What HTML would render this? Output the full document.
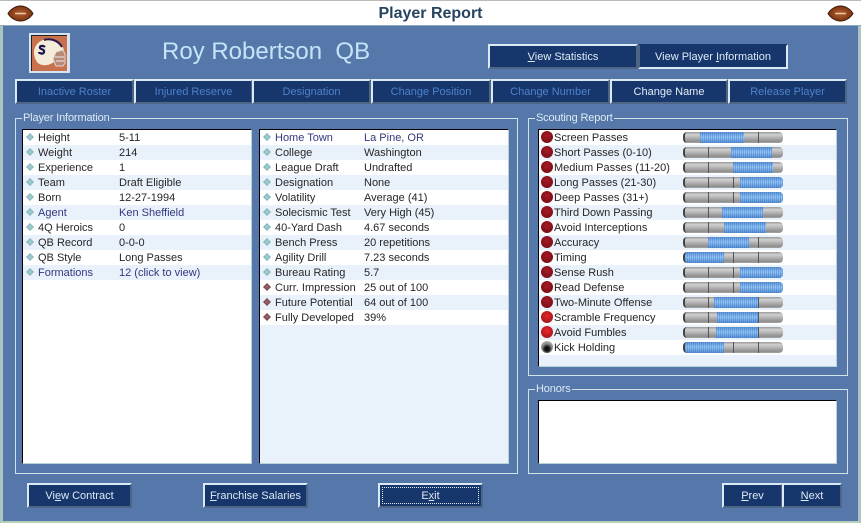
<!DOCTYPE html>
<html><head><meta charset="utf-8"><style>
html,body{margin:0;padding:0}
body{width:861px;height:523px;position:relative;overflow:hidden;background:#5577a9;font:11px/15px "Liberation Sans",sans-serif;color:#262626}
div,span{position:absolute;box-sizing:border-box}
.b{background:#16366c;border:2px solid;border-color:#dbe9f5 #4d6686 #4d6686 #dbe9f5;color:#dfeaf5;text-align:center;line-height:23px;white-space:nowrap}
.t{top:79px;height:25px;color:#4f83ca}
.g{border:1px solid #cfe3e8}
.l{color:#dcebf5;background:#5577a9;left:6px;top:-8px;padding:0 1px;line-height:14px;white-space:nowrap;letter-spacing:-.15px}
.lst{background:#fff;border:1px solid;border-color:#000 #b8d2d8 #b8d2d8 #000}
.r{position:relative;height:15px;white-space:nowrap}
.r span{top:1px}
.e{background:#e9f1fb}
.a{color:#33397f}
.d{width:8px;height:8px;top:3px!important;left:3px;background:radial-gradient(circle,#a5d6d2,#6898a8);clip-path:polygon(50% 0,100% 50%,50% 100%,0 50%)}
.x{background:radial-gradient(circle,#a06a70,#5a2a30)}
.o{width:12px;height:12px;left:2px;top:1px!important;border-radius:50%;background:radial-gradient(circle at 50% 40%,#a81a24,#6c0a14)}
.bar{left:144px;top:2px!important;width:100px;height:11px;border-radius:4px;overflow:hidden;background:linear-gradient(#9a9a9a,#d0d0d0 25%,#aaa 60%,#8e8e8e 85%,#a5a5a5);border-left:2px solid #444}
.bar i{position:absolute;top:0;bottom:0;width:1px;background:#555}
.bar b{position:absolute;top:0;bottom:0;background:linear-gradient(rgba(40,90,170,.4),rgba(255,255,255,.15) 45%,rgba(40,90,170,.45)),repeating-linear-gradient(90deg,#5a9ae6 0 1px,#86bdf0 1px 2px)}
u{text-decoration:underline}
</style></head><body>
<div style="left:0;top:0;width:861px;height:523px;border:3px solid #aac4c0;border-top:0;border-bottom:2px solid #b5d0b8"></div>
<div style="left:0;top:0;width:861px;height:26px;background:#fff;border-top:1px solid #bbb;border-bottom:1px solid #8fa9c0"></div>
<div style="left:0;top:4px;width:861px;text-align:center;font:bold 16px/20px 'Liberation Sans',sans-serif;color:#26445f">Player Report</div>
<svg style="position:absolute;left:7px;top:5px" width="27" height="17"><defs><radialGradient id="fb"><stop offset="0" stop-color="#b55f30"/><stop offset="1" stop-color="#7a3414"/></radialGradient></defs><path d="M1 8.500C4 3.500 9 1 13.500 1S23 3.500 26 8.500C23 13.500 18 16 13.500 16S4 13.500 1 8.500z" fill="url(#fb)" stroke="#3d1a08"/><path d="M8 8.500h11" stroke="#e8c8a0" stroke-width="1.500"/></svg>
<svg style="position:absolute;left:827px;top:5px" width="27" height="17"><path d="M1 8.500C4 3.500 9 1 13.500 1S23 3.500 26 8.500C23 13.500 18 16 13.500 16S4 13.500 1 8.500z" fill="url(#fb)" stroke="#3d1a08"/><path d="M8 8.500h11" stroke="#e8c8a0" stroke-width="1.500"/></svg>

<svg style="position:absolute;left:29px;top:33px" width="41" height="40"><rect x="0" y="0" width="41" height="40" fill="#d5e4ee"/><rect x="2" y="2" width="36" height="36" fill="#c8714c"/><path d="M2.500 38V2.500H38" fill="none" stroke="#222"/><path d="M5 20C5 11 12 6 20 6c8 0 13 5 15 11l-8 2v8C22 33 12 34 8 29c-2-3-3-6-3-9z" fill="#f4ecd8"/><path d="M15 7c6-2 14 0 18 7" fill="none" stroke="#2a1a50" stroke-width="2"/><path d="M16 14c-2-2-6-1-5 1s5 1 4 4-5 1-5 0" fill="none" stroke="#1a1450" stroke-width="2.200"/><path d="M27 19l7-2 2 4v9l-2 3h-7l-3-7z" fill="#b88878" stroke="#e0d8d0"/><path d="M26 24h9M27 28h8" stroke="#eee"/></svg>
<div style="left:162px;top:37px;font-size:24px;line-height:30px;color:#c5e4f8;white-space:pre">Roy Robertson  QB</div>

<div class="b" style="left:488px;top:44px;width:150px;height:25px"><u>V</u>iew Statistics</div>
<div class="b" style="left:638px;top:44px;width:150px;height:25px;border-color:#16366c #dbe9f5 #dbe9f5 #4d6686">View Player <u>I</u>nformation</div>

<div class="b t" style="left:15px;width:119px">Inactive Roster</div>
<div class="b t" style="left:134px;width:119px">Injured Reserve</div>
<div class="b t" style="left:252px;width:119px">Designation</div>
<div class="b t" style="left:371px;width:120px">Change Position</div>
<div class="b t" style="left:491px;width:119px">Change Number</div>
<div class="b t" style="left:610px;width:118px;color:#e4eef8">Change Name</div>
<div class="b t" style="left:728px;width:119px">Release Player</div>

<div class="g" style="left:15px;top:118px;width:503px;height:356px"><div class="l">Player Information</div></div>
<div class="g" style="left:528px;top:118px;width:320px;height:258px"><div class="l">Scouting Report</div></div>
<div class="g" style="left:528px;top:389px;width:320px;height:85px"><div class="l">Honors</div></div>

<div class="lst" style="left:22px;top:129px;width:230px;height:335px">
<div class="r"><span class="d"></span><span style="left:15px">Height</span><span style="left:96px">5-11</span></div>
<div class="r e"><span class="d"></span><span style="left:15px">Weight</span><span style="left:96px">214</span></div>
<div class="r"><span class="d"></span><span style="left:15px">Experience</span><span style="left:96px">1</span></div>
<div class="r e"><span class="d"></span><span style="left:15px">Team</span><span style="left:96px">Draft Eligible</span></div>
<div class="r"><span class="d"></span><span style="left:15px">Born</span><span style="left:96px">12-27-1994</span></div>
<div class="r e a"><span class="d"></span><span style="left:15px">Agent</span><span style="left:96px">Ken Sheffield</span></div>
<div class="r"><span class="d"></span><span style="left:15px">4Q Heroics</span><span style="left:96px">0</span></div>
<div class="r e"><span class="d"></span><span style="left:15px">QB Record</span><span style="left:96px">0-0-0</span></div>
<div class="r"><span class="d"></span><span style="left:15px">QB Style</span><span style="left:96px">Long Passes</span></div>
<div class="r e a"><span class="d"></span><span style="left:15px">Formations</span><span style="left:96px">12 (click to view)</span></div>
</div>

<div class="lst" style="left:259px;top:129px;width:250px;height:335px;background:#e9f1fb">
<div class="r a" style="background:#fff"><span class="d"></span><span style="left:15px">Home Town</span><span style="left:104px">La Pine, OR</span></div>
<div class="r e"><span class="d"></span><span style="left:15px">College</span><span style="left:104px">Washington</span></div>
<div class="r" style="background:#fff"><span class="d"></span><span style="left:15px">League Draft</span><span style="left:104px">Undrafted</span></div>
<div class="r e"><span class="d"></span><span style="left:15px">Designation</span><span style="left:104px">None</span></div>
<div class="r" style="background:#fff"><span class="d"></span><span style="left:15px">Volatility</span><span style="left:104px">Average (41)</span></div>
<div class="r e"><span class="d"></span><span style="left:15px">Solecismic Test</span><span style="left:104px">Very High (45)</span></div>
<div class="r" style="background:#fff"><span class="d"></span><span style="left:15px">40-Yard Dash</span><span style="left:104px">4.67 seconds</span></div>
<div class="r e"><span class="d"></span><span style="left:15px">Bench Press</span><span style="left:104px">20 repetitions</span></div>
<div class="r" style="background:#fff"><span class="d"></span><span style="left:15px">Agility Drill</span><span style="left:104px">7.23 seconds</span></div>
<div class="r e"><span class="d"></span><span style="left:15px">Bureau Rating</span><span style="left:104px">5.7</span></div>
<div class="r" style="background:#fff"><span class="d x"></span><span style="left:15px">Curr. Impression</span><span style="left:104px">25 out of 100</span></div>
<div class="r e"><span class="d x"></span><span style="left:15px">Future Potential</span><span style="left:104px">64 out of 100</span></div>
<div class="r" style="background:#fff"><span class="d x"></span><span style="left:15px">Fully Developed</span><span style="left:104px">39%</span></div>
</div>

<div class="lst" style="left:538px;top:129px;width:299px;height:238px;background:#e9f1fb">
<div class="r" style="background:#fff"><span class="o"></span><span style="left:15px">Screen Passes</span><span class="bar"><i style="left:23px"></i><i style="left:48px"></i><i style="left:73px"></i><b style="left:15px;width:44px"></b></span></div>
<div class="r e"><span class="o"></span><span style="left:15px">Short Passes (0-10)</span><span class="bar"><i style="left:23px"></i><i style="left:48px"></i><i style="left:73px"></i><b style="left:46px;width:41px"></b></span></div>
<div class="r" style="background:#fff"><span class="o"></span><span style="left:15px">Medium Passes (11-20)</span><span class="bar"><i style="left:23px"></i><i style="left:48px"></i><i style="left:73px"></i><b style="left:48px;width:40px"></b></span></div>
<div class="r e"><span class="o"></span><span style="left:15px">Long Passes (21-30)</span><span class="bar"><i style="left:23px"></i><i style="left:48px"></i><i style="left:73px"></i><b style="left:55px;width:43px"></b></span></div>
<div class="r" style="background:#fff"><span class="o"></span><span style="left:15px">Deep Passes (31+)</span><span class="bar"><i style="left:23px"></i><i style="left:48px"></i><i style="left:73px"></i><b style="left:55px;width:43px"></b></span></div>
<div class="r e"><span class="o"></span><span style="left:15px">Third Down Passing</span><span class="bar"><i style="left:23px"></i><i style="left:48px"></i><i style="left:73px"></i><b style="left:37px;width:41px"></b></span></div>
<div class="r" style="background:#fff"><span class="o"></span><span style="left:15px">Avoid Interceptions</span><span class="bar"><i style="left:23px"></i><i style="left:48px"></i><i style="left:73px"></i><b style="left:39px;width:42px"></b></span></div>
<div class="r e"><span class="o"></span><span style="left:15px">Accuracy</span><span class="bar"><i style="left:23px"></i><i style="left:48px"></i><i style="left:73px"></i><b style="left:23px;width:41px"></b></span></div>
<div class="r" style="background:#fff"><span class="o"></span><span style="left:15px">Timing</span><span class="bar"><i style="left:23px"></i><i style="left:48px"></i><i style="left:73px"></i><b style="left:0;width:39px"></b></span></div>
<div class="r e"><span class="o"></span><span style="left:15px">Sense Rush</span><span class="bar"><i style="left:23px"></i><i style="left:48px"></i><i style="left:73px"></i><b style="left:55px;width:43px"></b></span></div>
<div class="r" style="background:#fff"><span class="o"></span><span style="left:15px">Read Defense</span><span class="bar"><i style="left:23px"></i><i style="left:48px"></i><i style="left:73px"></i><b style="left:55px;width:43px"></b></span></div>
<div class="r e"><span class="o"></span><span style="left:15px">Two-Minute Offense</span><span class="bar"><i style="left:23px"></i><i style="left:48px"></i><i style="left:73px"></i><b style="left:29px;width:44px"></b></span></div>
<div class="r" style="background:#fff"><span class="o" style="background:radial-gradient(circle at 50% 40%,#e8262c,#8c1018)"></span><span style="left:15px">Scramble Frequency</span><span class="bar"><i style="left:23px"></i><i style="left:48px"></i><i style="left:73px"></i><b style="left:32px;width:41px"></b></span></div>
<div class="r e"><span class="o" style="background:radial-gradient(circle at 50% 40%,#f0282c,#8c1018)"></span><span style="left:15px">Avoid Fumbles</span><span class="bar"><i style="left:23px"></i><i style="left:48px"></i><i style="left:73px"></i><b style="left:31px;width:42px"></b></span></div>
<div class="r" style="background:#fff"><span class="o" style="background:radial-gradient(circle at 50% 65%,#111 22%,#888 50%,#aaa 75%,#666)"></span><span style="left:15px">Kick Holding</span><span class="bar"><i style="left:23px"></i><i style="left:48px"></i><i style="left:73px"></i><b style="left:0;width:39px"></b></span></div>
</div>

<div class="lst" style="left:538px;top:400px;width:299px;height:64px"></div>

<div class="b" style="left:27px;top:483px;width:105px;height:25px">Vi<u>e</u>w Contract</div>
<div class="b" style="left:203px;top:483px;width:105px;height:25px"><u>F</u>ranchise Salaries</div>
<div class="b" style="left:378px;top:483px;width:105px;height:25px">E<u>x</u>it<div style="left:2px;top:2px;right:2px;bottom:2px;border:1px dotted #dfeaf5"></div></div>
<div class="b" style="left:722px;top:483px;width:61px;height:25px"><u>P</u>rev</div>
<div class="b" style="left:782px;top:483px;width:60px;height:25px"><u>N</u>ext</div>
</body></html>
